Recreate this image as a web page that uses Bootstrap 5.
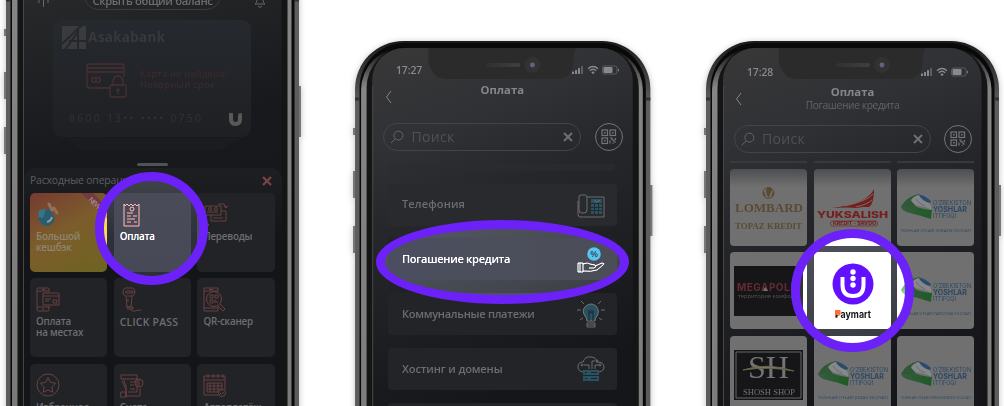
<!DOCTYPE html>
<html lang="ru">
<head>
<meta charset="utf-8">
<meta name="viewport" content="width=device-width, initial-scale=1">
<title>Оплата — Погашение кредита</title>
<link href="https://cdn.jsdelivr.net/npm/bootstrap@5.3.0/dist/css/bootstrap.min.css" rel="stylesheet">
<style>
body{background:#fff;font-family:"Open Sans","Noto Sans",sans-serif;color:#808183;overflow:hidden}
.stage{width:1004px;height:406px}
.phone{width:293px;height:600px;flex:none;filter:drop-shadow(0 1px 3px rgba(0,0,0,.25))}
.p1{margin:-58px 0 0 6px}.p2{margin:41px 0 0 55.5px;width:295.5px}.p3{margin:41px 0 0 56px}
.frame{left:-3px;top:0}
.scr{margin:0 17px}
.p1 .scr{padding-top:58px}
svg{display:block;flex:none}
.ln{fill:none;stroke:currentColor;stroke-width:1}
.pill{width:137px;height:29px;margin:-19px auto 0;border:1px solid #393b3d;border-radius:15px;font-size:11.3px;font-weight:600;color:#6b6d6f;line-height:1;padding-top:13px;letter-spacing:-.4px}
.bankcard{width:198px;height:117px;margin:10px 0 0 30px;border-radius:9px;background:linear-gradient(#26292e,#1e2023)}
.handle{width:31px;height:3px;border-radius:2px;background:#515255;margin:26px auto 0 114px}
.sheet{height:300px;margin:2px 0 0 1px;border-radius:12px 12px 0 0;background:linear-gradient(#1d1f22,#141518 70px);padding:6px 6px 0}
.sheet-h{font-size:10.4px;line-height:13px;height:19px;color:#5c5e60;letter-spacing:-.15px}
.tiles{display:grid;grid-template-columns:repeat(3,77.3px);gap:6.4px}
.tile{height:79px;border-radius:5px;background:#222327;padding:9px 0 0 6px;font-size:9.8px;line-height:10.5px;letter-spacing:-.2px;font-weight:600;color:#6d6e70}
.tile svg{color:#69413f;margin-bottom:5px}
.hot{background:linear-gradient(150deg,#763a31 0%,#7c5c2c 45%,#6e6420 100%)}
.status{height:13px;font-size:10.4px;line-height:12px;font-weight:600;letter-spacing:-.1px;color:#88898b}
.ttl{font-size:11.3px;line-height:14px;font-weight:700;letter-spacing:0;color:#858688}
.sub{font-size:10.2px;line-height:13px;color:#626365;letter-spacing:-.1px}
.find{width:198px;height:28px;border:1px solid #434447;border-radius:14px;font-size:14px;line-height:26px;color:#505154;letter-spacing:.3px}
.qr{width:28px;height:28px;border:1px solid #737476;color:#737476}
.opt{width:229px;height:42px;margin:0 0 12.8px 16px;border-radius:4px;background:#232428;padding:0 12px 0 14.5px;font-size:11.1px;letter-spacing:-.3px;font-weight:600;color:#6c6d6f}
.opt.sel{background:linear-gradient(90deg,#21222a,#212226);color:#808080}
.logo-tile{height:77px;border-radius:4px;background:#707070;overflow:hidden}
.shade{background:linear-gradient(#4d4e50,#707070 18px)}
.logos{display:grid;grid-template-columns:repeat(3,77.3px);gap:6.3px;margin:6px 0 0 7px}
.ring{position:absolute;border-radius:50%}
.ring i{position:absolute;inset:7px;border-radius:50%;backdrop-filter:brightness(2.28)}
.ring b{position:absolute;inset:0;border:9px solid #6c21f8;border-radius:50%}
</style>
</head>
<body>
<svg width="0" height="0" class="position-absolute">
<defs>
<linearGradient id="rim" x2="0" y2="1"><stop offset="0" stop-color="#191a1b"/><stop offset=".05" stop-color="#3b3c3d"/><stop offset=".09" stop-color="#5c5d5d"/><stop offset="1" stop-color="#5a5a5a"/></linearGradient>
<linearGradient id="metal" x2="0" y2="1"><stop offset="0" stop-color="#000"/><stop offset=".02" stop-color="#333"/><stop offset=".06" stop-color="#858585"/><stop offset="1" stop-color="#757575"/></linearGradient>
<linearGradient id="glass" x2=".15" y2="1"><stop offset="0" stop-color="#383838"/><stop offset=".16" stop-color="#303135"/><stop offset=".28" stop-color="#26272b"/><stop offset=".6" stop-color="#151619"/></linearGradient>
<linearGradient id="cord" x2="1"><stop offset="0" stop-color="#303031"/><stop offset="1" stop-color="#3f3f40"/></linearGradient>
<linearGradient id="leaf" x2="1"><stop offset="0" stop-color="#385c41"/><stop offset="1" stop-color="#1f5a25"/></linearGradient>
<linearGradient id="glassfirst" x2=".1" y2="1"><stop offset="0" stop-color="#303133"/><stop offset=".1" stop-color="#252729"/><stop offset=".33" stop-color="#18191c"/><stop offset="1" stop-color="#141518"/></linearGradient>
<g id="body">
<path d="M1 87h3v7h-3zM1 130h3v27h-3zM1 185h3v27h-3zM295 144h3v51h-3z" fill="#777"/>
<rect x="3" width="293" height="680" rx="48" fill="url(#rim)"/>
<rect x="7.500" y="2" width="284" height="676" rx="45" fill="#090909"/>
<rect x="9" y="6" width="279.500" height="676" rx="43" fill="url(#metal)"/>
<rect x="14.500" y="6.500" width="270" height="676" rx="40" fill="#151515"/>
<path d="M3 58h4.500M291.500 58h4.500" stroke="#333" stroke-width="3"/>
</g>
<g id="notch"><path d="M75 7c3 5-2 12 3 20 3 8 9 11 17 11h107c10 0 15-4 17-12 2-8-1-14 4-19z" fill="#2b2b2c"/>
<rect x="133" y="22" width="34" height="4" rx="2" fill="url(#cord)"/><circle cx="179" cy="24" r="8" fill="#323233"/><circle cx="179" cy="24" r="2.400" fill="#616481"/></g>
<symbol id="bars" viewBox="0 0 48 12"><g fill="currentColor"><rect x="1" y="7.500" width="2" height="2.500" rx=".5"/><rect x="4" y="6" width="2" height="4" rx=".5"/><rect x="7" y="4" width="2" height="6" rx=".5"/><rect x="10" y="2" width="2" height="8" rx=".5" opacity=".5"/><rect x="32.500" y="3" width="9" height="6" rx="1"/><path d="M47 4.500v3q1-.5 1-1.500t-1-1.500"/></g><rect x="31.500" y="2" width="14.500" height="8" rx="2" fill="none" stroke="currentColor" opacity=".45"/><path d="M17 4.700q5-4.500 10 0M18.800 6.800q3.200-3 6.400 0" fill="none" stroke="currentColor" stroke-width="1.500"/><path d="M20.300 8.200q1.700-1.300 3.400 0l-1.700 2z" fill="currentColor"/></symbol>
<symbol id="lens" viewBox="0 0 15 15"><g class="ln" stroke-width="1.200"><circle cx="9" cy="6" r="4.800"/><path d="M5.500 9.500L1 14"/></g></symbol>
<symbol id="qrc" viewBox="0 0 16 16"><g fill="none" stroke="currentColor" stroke-width="1.200"><rect x="1" y="1" width="5.500" height="5.500"/><rect x="9" y="1" width="5.500" height="5.500"/><rect x="1" y="9" width="5.500" height="5.500"/><path d="M9 14.500v-3M9 9h2v2h2v2h2M14.500 9v2M11.500 14.500h1"/></g><path d="M3 3h1.600v1.600H3zM11 3h1.600v1.600H11zM3 11h1.600v1.600H3z" fill="currentColor"/></symbol>
<symbol id="yosh" viewBox="0 0 77 77"><path d="M4 38Q9 28 22 25q-9 7-4 12 6 3 17 4-1 6-1 9-12-4-21-6-8-2-9-6z" fill="url(#leaf)"/><path d="M4 38Q9 28 22 25q-9 7-4 12l-5 1q-6-1-9 0z" fill="#305736"/><path d="M14 31q4-5 9-5 3 5 9 8 3 3 2 7-3-3-11-4-7-1-9-6z" fill="#858788"/><path d="M21 25q8 2 13 7l-1 2q-7-1-12-9z" fill="#294b70"/><path d="M19 30q3 5 9 7" stroke="#686a6c" fill="none"/>
<g fill="#2c4864" font-family="Inter,sans-serif" font-size="6.600"><text x="36" y="36" textLength="38" lengthAdjust="spacingAndGlyphs">O‘ZBEKISTON</text><text x="36" y="42.600" font-weight="700" font-size="7.300" textLength="34" lengthAdjust="spacingAndGlyphs">YOSHLAR</text><text x="36" y="48.800" textLength="23" lengthAdjust="spacingAndGlyphs">ITTIFOQI</text></g></symbol>
</defs></svg>

<main class="stage position-relative overflow-hidden d-flex align-items-start">

<section class="phone p1 position-relative">
<svg class="frame position-absolute" width="300" height="600"><use href="#body"/><rect x="20" y="7" width="258.500" height="650" rx="32" fill="url(#glassfirst)"/><path d="M20.500 45V600" stroke="#454647"/></svg>
<div class="scr position-relative">
<div class="position-relative">
<div class="pill text-center text-nowrap">Скрыть общий баланс</div>
<svg class="position-absolute" style="left:14px;top:13px" width="238" height="16"><path class="ln" stroke-width="1.300" d="M2 0v9M6.500 0v13M11 0v9" style="color:#68696b"/><path class="ln" style="color:#68696b" d="M218 10q2-1 2-4V3q3-5 6 0v3q0 3 2 4zM221 12q2 3 4 0"/></svg>
</div>
<div class="bankcard position-relative">
<svg width="198" height="127" style="overflow:visible"><path d="M12 118q3 5 10 6 3 6 9 6h135q7 0 10-6 9-1 11-6" fill="#1b1c1f"/>
<path d="M9 6h24v23H9z" fill="#393b3e"/><path d="M9 24L29 5M11 31L25 12v18M16 21h17" stroke="#25272b" stroke-width="2" fill="none"/>
<text x="35" y="22" font-size="13.500" font-weight="700" fill="#37393c" textLength="77" font-family="Noto Sans">Asakabank</text>
<g fill="none" stroke="#482f30" stroke-width="1.300"><path d="M57 68H37q-3 0-3-3V47q0-3 3-3h31q3 0 3 3v10M34 48h37M34 52h37"/><circle cx="41" cy="60" r="2.300"/><circle cx="45" cy="60" r="2.300"/><rect x="57" y="65" width="16" height="12" rx="1.500"/><path d="M60 65v-4q1-5 5-5t5 5v4M65 70v4"/><circle cx="65" cy="70" r="1"/></g>
<g fill="#3f2c2e" font-size="9.500"><text x="87" y="56.500" textLength="88">Карта не найдена/</text><text x="87" y="68" textLength="75">Неверный срок</text></g>
<text x="16" y="102" font-size="10.500" fill="#313337" textLength="132">8600 13•• •••• 0750</text>
<path d="M178 93v6q0 5 4.500 5t4.500-5v-4" fill="none" stroke="#58595b" stroke-width="4"/><path d="M185.500 93h3.500v2h-3.500z" fill="#67482d"/></svg>
</div>
<div class="handle"></div>
<div class="sheet">
<div class="sheet-h d-flex justify-content-between"><span>Расходные операции</span><svg width="10" height="10" style="margin:2px 4.500px 0 0"><path d="M1 1l8 8M9 1L1 9" stroke="#7c4441" stroke-width="2.200"/></svg></div>
<div class="tiles">
<div class="tile hot position-relative overflow-hidden"><svg width="24" height="25"><path d="M3 10l10-3 6 9q-2 7-8 8-6-1-9-8z" fill="#265d72"/><path d="M3 8l7-1-3 9-5-1z" fill="#3b7385"/><path d="M11 20q4-1 5-5" stroke="#9b9b95" fill="none" stroke-width="2"/><path d="M13 2l3 6M18 6l3 5" stroke="#91705c" stroke-width="3" stroke-linecap="round"/></svg><span style="color:#8f8570">Большой<br>кешбэк</span><svg class="position-absolute top-0 end-0" width="26" height="26"><path d="M0 0h12l14 14v12z" fill="#733b40"/><text x="7" y="7" transform="rotate(45 7 7)" font-size="7" fill="#aa8c86" textLength="14">NEW</text></svg></div>
<div class="tile" style="color:#818181;background:linear-gradient(#202127,#1f2026)"><svg width="24" height="25" style="color:#795351"><path class="ln" stroke-width="1.300" d="M4 2v22h15V2l-2 2-2-2-2 2-2-2-2 2-2-2-2 2zM7 11h6M7 14h4M7 17h8M7 20h4M13 14h4M14 20h3"/><circle class="ln" cx="12" cy="7" r="2"/></svg>Оплата</div>
<div class="tile"><svg width="26" height="25"><path class="ln" d="M2 13V4h16v9zM18 9h5v10H8v-6M4 10h11M10 16h10M15 2h5q3 0 3 4m-2-2l2 2 2-2M2 19v2q0 2 4 2m-2-2l2 2-2 2"/><circle class="ln" cx="7" cy="7" r="1.500"/><circle class="ln" cx="13" cy="7" r="1.500"/></svg>Переводы</div>
<div class="tile"><svg width="24" height="25"><path class="ln" d="M13 5V2Q13 1 12 1H2Q1 1 1 2v21q0 1 1 1h10q1 0 1-1v-4M1 4h12M1 20h12M6 2.500h3M6 22h2M7 6h15q1 0 1 1v11H7zM7 9h16M9 12h6M9 14h4M17 13h4v3h-4z"/></svg>Оплата<br>на местах</div>
<div class="tile"><svg width="24" height="25"><path class="ln" d="M5 1h8q2 1 2 4t-3 4l-1 11H7L6 9Q3 8 3 5t2-4zM6 4h7v2H6zM7 9h5M8 12v3M6 20h7v2H7M10 22q2 3 5 2t6-1"/></svg><span style="font-size:10.400px;letter-spacing:.25px">CLICK PASS</span></div>
<div class="tile"><svg width="24" height="25"><path class="ln" d="M15 5V1H1v23h14v-4M1 4h14M1 21h14M6 2.500h4M17 17l5 5-2 2-5-5"/><circle class="ln" cx="11" cy="12" r="7.500"/><path class="ln" d="M7 8h3v3H7zM12 8h3v3h-3zM7 13h3v3H7zM12 16v-3l3 3"/></svg>QR-сканер</div>
<div class="tile"><svg width="25" height="25"><circle class="ln" cx="12" cy="12" r="11"/><path class="ln" d="M12 4.500l2.400 4.900 5.300.8-3.800 3.800.9 5.300-4.800-2.500-4.800 2.500.9-5.300L4.300 10.200l5.300-.8z"/></svg>Избранное</div>
<div class="tile"><svg width="24" height="25"><path class="ln" d="M4 6H1V2h16v4H4v2l2 5v10h14v-8M17 6v13H8M10 9h5M10 12h4M10 16h5M2 8l4 8v8M0 24h6v-5H1z"/><circle class="ln" cx="19" cy="10" r="4"/><path class="ln" d="M19 7v6"/></svg>Счета</div>
<div class="tile"><svg width="25" height="25"><path class="ln" d="M16 22H1V3h21v14M1 7h21M5 1v4M10 1v4M15 1v4M20 1v4M4 10h15v9H4zM4 13h15M4 16h15M7 10v9M11 10v9M15 10v9"/><circle cx="19" cy="20" r="3.500" fill="#222327" stroke="currentColor"/><path class="ln" d="M17 20l1.500 1.500L21 19"/></svg>Автоплатёж</div>
</div></div></div>
</section>

<section class="phone p2 position-relative">
<svg class="frame position-absolute" width="302" height="600"><g transform="scale(1.008 1)"><use href="#body"/><rect x="20" y="7" width="258.500" height="650" rx="32" fill="url(#glass)"/><use href="#notch"/><path d="M20.500 45V600" stroke="#454647"/></g></svg>
<div class="scr position-relative" style="padding-top:23px">
<div class="status d-flex justify-content-between"><span style="margin-left:24.500px">17:27</span><svg width="48" height="12" style="margin-right:14px"><use href="#bars"/></svg></div>
<div class="ttl text-center position-relative" style="margin-top:6px"><svg class="position-absolute" style="left:13px;top:7px" width="8" height="14"><path class="ln" stroke-width="1.400" d="M6 1L1.500 7 6 13"/></svg>Оплата</div>
<div class="d-flex align-items-center" style="margin:26px 0 0 11px"><div class="find d-flex align-items-center"><svg width="14" height="14" style="margin:0 8px 0 6px;color:#66676a"><use href="#lens"/></svg>Поиск<svg width="10" height="10" class="ms-auto" style="margin-right:7px"><path d="M1 1l8 8M9 1L1 9" stroke="#6e6f71" stroke-width="2"/></svg></div><div class="qr rounded-circle d-flex align-items-center justify-content-center" style="margin-left:14px"><svg width="16" height="16"><use href="#qrc"/></svg></div></div>
<div style="height:7px;margin:13px 18px 12.500px 16px;background:#2b2c30;opacity:.6;border-radius:0 0 4px 4px"></div>
<div class="opt d-flex align-items-center justify-content-between" style="background:#292a2e"><span style="letter-spacing:.1px">Телефония</span><svg width="28" height="26"><path class="ln" d="M4 3h4q2 0 2 3v12q0 3-3 3H5q-3 0-3-3V5q0-2 2-2M10 5h17v20H3q-2 0-2-3V9"/><path d="M14 7h11v4H14zM14 12h3v3h-3zm4 0h3v3h-3zm4 0h3v3h-3zm-8 4h3v2h-3zm4 0h3v2h-3zm4 0h3v2h-3zm-8 3h3v3h-3zm4 0h3v3h-3zm4 0h3v3h-3z" fill="#285362"/><path d="M17 8l3 2 3-2" fill="none" stroke="#6c6d6f"/></svg></div>
<div class="opt sel d-flex align-items-center justify-content-between"><span>Погашение кредита</span><svg width="28" height="27"><circle cx="17" cy="8" r="6.800" fill="#26566a"/><text x="17" y="11" text-anchor="middle" font-size="9" fill="#171d24">%</text><path class="ln" d="M1 17h5v9H1zM6 18q5-2 7 0l5 1q2 2-1 3h-5M18 20l7-3q3 0 1 2l-6 5q-6 2-14 1M3 17v9"/></svg></div>
<div class="opt d-flex align-items-center justify-content-between"><span>Коммунальные платежи</span><svg width="28" height="27"><path d="M10 20q0-3-2-5-4-6 1-10 5-4 10 0 4 5 1 10-2 2-2 5z" fill="#285161" stroke="#77787a"/><path class="ln" d="M10 22h8v4h-8zM10 24h8M0 9h4M24 9h4M3 19l3-2M22 17l3 2M4 0l3 3M24 0l-3 3"/><path d="M12 20v-9q2 2 4 0v9M11 10h6" fill="none" stroke="#20252a"/></svg></div>
<div class="opt d-flex align-items-center justify-content-between"><span style="letter-spacing:-.15px">Хостинг и домены</span><svg width="28" height="27"><path class="ln" d="M6 17q-5-1-5-5 0-5 5-5 2-6 8-5 5 0 6 5 7 0 7 5 0 4-5 5M12 14v-4H7M15 14V6h3M18 14v-4h4"/><circle class="ln" cx="5" cy="10" r="1"/><circle class="ln" cx="20" cy="6" r="1"/><circle class="ln" cx="23" cy="10" r="1"/><path d="M6 15h16v5H6zM6 21h16v5H6z" fill="#285162"/><path d="M8 17.500h2M8 23.500h2M14 17.500h6M14 23.500h6" stroke="#17242b"/></svg></div>
<div class="opt"></div>
</div>
</section>

<section class="phone p3 position-relative">
<svg class="frame position-absolute" width="300" height="600"><use href="#body"/><rect x="20" y="7" width="258.500" height="650" rx="32" fill="url(#glass)"/><use href="#notch"/><path d="M20.500 45V600" stroke="#454647"/></svg>
<div class="scr position-relative" style="padding-top:25px">
<div class="status d-flex justify-content-between"><span style="margin-left:24px">17:28</span><svg width="48" height="12" style="margin-right:14px"><use href="#bars"/></svg></div>
<div class="ttl text-center position-relative" style="margin-top:6px"><svg class="position-absolute" style="left:12px;top:7px" width="8" height="14"><path class="ln" stroke-width="1.400" d="M6 1L1.500 7 6 13"/></svg>Оплата</div>
<div class="sub text-center"><span style="letter-spacing:-.35px">Погашение кредита</span></div>
<div class="d-flex align-items-center" style="margin:13px 0 0 11px"><div class="find d-flex align-items-center" style="width:197px"><svg width="14" height="14" style="margin:0 7px 0 6px;color:#66676a"><use href="#lens"/></svg>Поиск<svg width="10" height="10" class="ms-auto" style="margin-right:7px"><path d="M1 1l8 8M9 1L1 9" stroke="#6e6f71" stroke-width="2"/></svg></div><div class="qr rounded-circle d-flex align-items-center justify-content-center" style="margin-left:13px"><svg width="16" height="16"><use href="#qrc"/></svg></div></div>
<div class="logos" style="margin-top:8px"><div style="height:2px;background:#38393c"></div><div style="height:2px;background:#38393c"></div><div style="height:2px;background:#38393c"></div></div>
<div class="logos">
<div class="logo-tile shade"><svg width="77" height="77" font-family="Liberation Serif" font-weight="700" fill="#594b31"><path d="M33 22q2 1 3 7-4-3-3-7M39 18q3 1 3 4-3 3-3 7-3-3-3-8 1-3 3-3M44 22q1 4-3 7 1-6 3-7"/><circle cx="38.500" cy="24" r="5.500" fill="none" stroke="#594b31"/><text x="5" y="43" font-size="12" textLength="68" lengthAdjust="spacingAndGlyphs">LOMBARD</text><text x="5" y="60" font-size="8" textLength="67" lengthAdjust="spacingAndGlyphs">TOPAZ KREDIT</text></svg></div>
<div class="logo-tile shade"><svg width="77" height="77" font-family="Inter" font-weight="800" fill="#761d1d"><path d="M18 39q35-4 42-19 0 15-5 18h-7l-4 1q-12-1-26 0z"/><path d="M31 37q22-5 28-12M42 38q12-3 16-7" stroke="#707070" fill="none"/><text x="3" y="49" font-size="9.500" textLength="71" lengthAdjust="spacingAndGlyphs">YUKSALISH</text><rect x="16.500" y="52" width="47" height="5" rx="2" fill="none" stroke="#761d1d" stroke-width=".6"/><text x="19" y="56.200" font-size="4.500" textLength="43" lengthAdjust="spacingAndGlyphs">KREDIT - SAVDO</text></svg></div>
<div class="logo-tile shade"><svg width="77" height="77"><use href="#yosh"/><text x="4" y="63" font-size="3.800" fill="#2d4865" textLength="70" lengthAdjust="spacingAndGlyphs">YOSHLAR UYLARI XORAZM VILOYATI</text></svg></div>
<div class="logo-tile"><svg width="77" height="77"><path d="M4 14h69v50H4z" fill="#161618"/><text x="7" y="39" font-family="Inter" font-weight="700" font-size="10" fill="#652a33" textLength="63">MEGAPOLIS</text><path d="M33 39l2-4 3 4z" fill="#737373"/><text x="8" y="46" font-size="6" fill="#555658" textLength="62" lengthAdjust="spacingAndGlyphs">территория комфорта</text></svg></div>
<div class="logo-tile"><svg width="77" height="77"><circle cx="39" cy="32" r="20.500" fill="#2b0770"/><path d="M28.500 25v8q0 11 10.500 11t10.500-11v-8" fill="none" stroke="#707070" stroke-width="4"/><g fill="#707070"><circle cx="39" cy="20" r="2.700"/><circle cx="39" cy="26.500" r="2.700"/><circle cx="39" cy="33" r="2.700"/></g><text x="21" y="65.500" font-size="9.200" font-family="Inter" font-weight="700" fill="#0a0a0c" textLength="36" lengthAdjust="spacingAndGlyphs"><tspan fill="#703018">P</tspan>aymart</text><path d="M21 58h5.500v4.500h-3l-2.500 1z" fill="#703018"/><path d="M21.500 63.500l2-1v3h-2z" fill="#0a0a0c"/></svg></div>
<div class="logo-tile"><svg width="77" height="77"><use href="#yosh"/><text x="4" y="63" font-size="3.800" fill="#2d4865" textLength="70" lengthAdjust="spacingAndGlyphs">YOSHLAR UYLARI FARG‘ONA VILOYATI</text></svg></div>
<div class="logo-tile"><svg width="77" height="77" font-family="Liberation Serif" fill="#747475"><path d="M4 14h69v50H4z" fill="#161618"/><path d="M6 16h65v46H6z" fill="none" stroke="#666"/><text x="18" y="42" font-size="31" textLength="41" lengthAdjust="spacingAndGlyphs">SH</text><path d="M13 34q24-8 51 1-25-5-51-1" fill="#807b65" stroke="#66604a"/><text x="13" y="59" font-size="8" textLength="52" lengthAdjust="spacingAndGlyphs">SHOSH SHOP</text></svg></div>
<div class="logo-tile"><svg width="77" height="77"><use href="#yosh"/><text x="4" y="63" font-size="3.800" fill="#2d4865" textLength="70" lengthAdjust="spacingAndGlyphs">YOSHLAR UYLARI JIZZAX VILOYATI</text></svg></div>
<div class="logo-tile"><svg width="77" height="77"><use href="#yosh"/><text x="4" y="63" font-size="3.800" fill="#2d4865" textLength="70" lengthAdjust="spacingAndGlyphs">YOSHLAR UYLARI SURXONDARYO VILOYATI</text></svg></div>
</div></div>
</section>

<div class="ring" style="left:95px;top:172px;width:113px;height:113px"><i></i><b></b></div>
<div class="ring" style="left:376px;top:220px;width:253px;height:83.500px"><i></i><b></b></div>
<div class="ring" style="left:791px;top:228.500px;width:123px;height:123px"><i></i><b></b></div>
</main>
<script src="https://cdn.jsdelivr.net/npm/bootstrap@5.3.0/dist/js/bootstrap.bundle.min.js"></script>
</body>
</html>
